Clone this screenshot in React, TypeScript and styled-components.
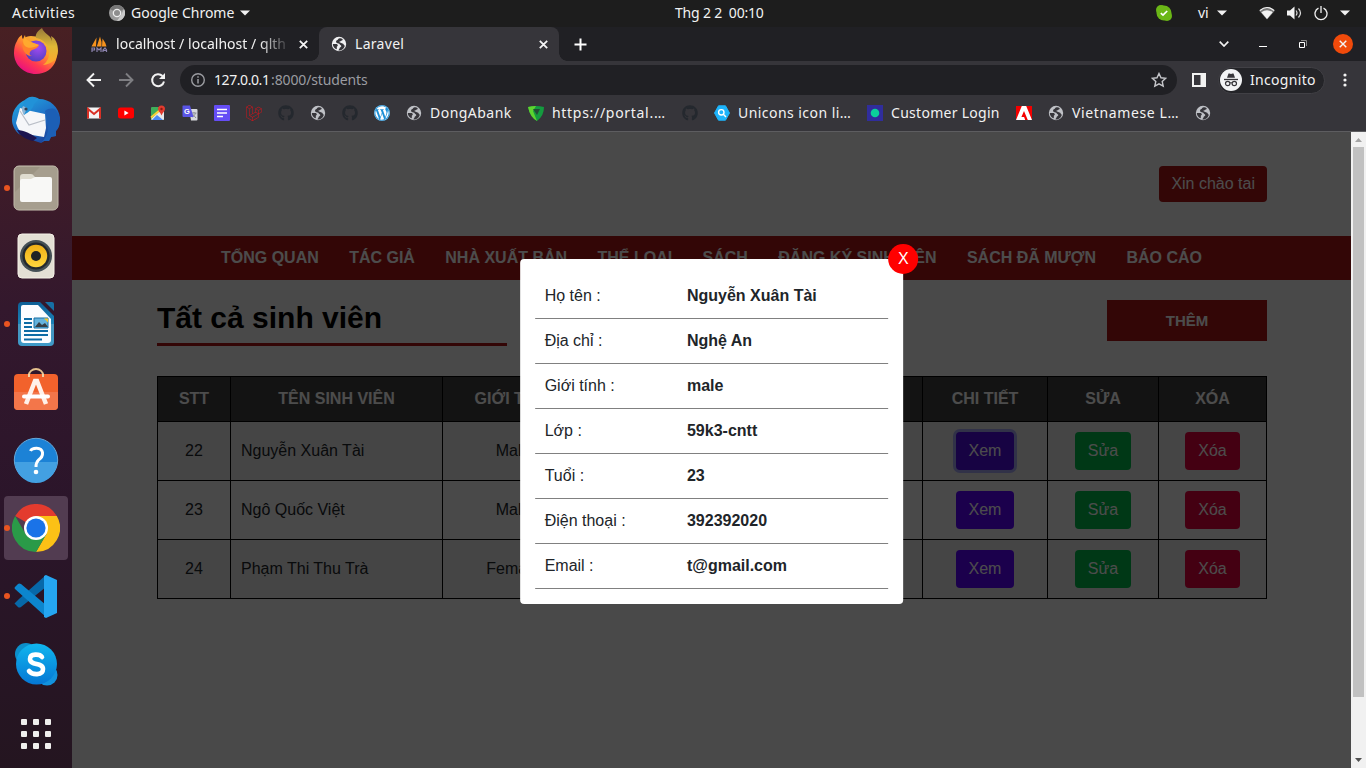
import React from "react";
import styled, { createGlobalStyle } from "styled-components";
import { FaGithub, FaLaravel, FaWordpress } from "react-icons/fa";

const GlobalStyle = createGlobalStyle`
  * { box-sizing: border-box; }
  body { margin: 0; overflow: hidden; background: #1d1d1d; }
  svg { display: block; flex: none; }
`;

const uiFont = `"Noto Sans", "Open Sans", sans-serif`;
const pageFont = `"Liberation Sans", Arial, sans-serif`;

const Desktop = styled.div`
  width: 1366px;
  height: 768px;
  display: flex;
  flex-direction: column;
  overflow: hidden;
  font-family: ${uiFont};
`;

const Label = styled.span<{ $w?: number; $size?: number; $ls?: number; $color?: string }>`
  display: block;
  flex: none;
  white-space: pre;
  width: ${(p) => (p.$w ? `${p.$w}px` : "auto")};
  font-size: ${(p) => p.$size ?? 14}px;
  letter-spacing: ${(p) => p.$ls ?? 0}px;
  color: ${(p) => p.$color ?? "#f2f2f2"};
`;

/* ---------- system bar ---------- */

const TopBar = styled.header`
  height: 27px;
  flex: none;
  display: grid;
  grid-template-columns: 675px auto 1fr;
  align-items: center;
  padding-bottom: 1px;
  background: #1d1d1d;
  line-height: 26px;
`;
const TopLeft = styled.div`
  display: flex;
  align-items: center;
  padding-left: 12px;
`;
const AppMenu = styled.div`
  display: flex;
  align-items: center;
  margin-left: 34px;
  gap: 6px;
`;
const Tray = styled.div`
  display: flex;
  align-items: center;
  justify-content: flex-end;
  padding-right: 16px;
`;
const TraySlot = styled.div<{ $ml: number }>`
  margin-left: ${(p) => p.$ml}px;
`;

const Caret = () => (
  <svg width="10" height="6" viewBox="0 0 10 6"><path d="M0 .5h10L5 5.5z" fill="#f2f2f2" /></svg>
);

/* ---------- dock ---------- */

const Workspace = styled.div`
  flex: 1;
  display: flex;
  min-height: 0;
`;
const Dock = styled.aside`
  width: 72px;
  flex: none;
  display: flex;
  flex-direction: column;
  overflow: hidden;
  background: linear-gradient(180deg, #482023 0%, #3d1b29 22%, #33182d 38%, #2b152a 65%, #241520 100%);
`;
const DockList = styled.div`
  display: flex;
  flex-direction: column;
  margin-top: -9px;
`;
const DockSlot = styled.div<{ $active?: boolean }>`
  height: 64px;
  margin: 2px 4px;
  border-radius: 4px;
  display: flex;
  align-items: center;
  background: ${(p) => (p.$active ? "#523c51" : "transparent")};
`;
const RunDot = styled.span<{ $on?: boolean }>`
  width: 6px;
  height: 6px;
  border-radius: 3px;
  margin-right: 2px;
  background: ${(p) => (p.$on ? "#e95420" : "transparent")};
`;
const AppGrid = styled.div`
  display: grid;
  grid-template-columns: repeat(3, 6px);
  gap: 6px;
  margin: 21px 0 0 21px;
`;
const GridDot = styled.span`
  height: 6px;
  border-radius: 1px;
  background: #f0efee;
`;

const FirefoxIcon = () => (
  <svg width="48" height="48" viewBox="0 0 48 48">
    <defs>
      <linearGradient id="ff1" x1=".85" y1=".1" x2=".25" y2=".95">
        <stop offset="0" stopColor="#e9c13d" /><stop offset=".35" stopColor="#ff9a2c" />
        <stop offset=".7" stopColor="#ff3a50" /><stop offset="1" stopColor="#e80f80" />
      </linearGradient>
      <radialGradient id="ff2" cx=".6" cy=".35" r=".7">
        <stop offset="0" stopColor="#a24af0" /><stop offset="1" stopColor="#4e3fc0" />
      </radialGradient>
      <linearGradient id="ff3" x1=".5" y1="0" x2=".5" y2="1">
        <stop offset="0" stopColor="#96793a" /><stop offset=".5" stopColor="#e0b936" /><stop offset="1" stopColor="#ffa62c" />
      </linearGradient>
    </defs>
    <path d="M5 13c1-3 3-5 5-6 0 2 0 3 1 4 2-2 5-3 8-3l10 1 12 6c4 5 5 11 3 17-3 9-11 14-20 14C12 46 2 37 2 25c0-5 1-9 3-12z" fill="url(#ff1)" />
    <path d="M30 0c-5 3-7 7-6 10 6 1 12 5 13 13 1 6-2 11-6 14 9-1 15-6 15-14 0-8-3-13-7-15l1 5C38 6 32 6 30 0z" fill="url(#ff3)" />
    <circle cx="24" cy="23" r="10.5" fill="url(#ff2)" />
    <path d="M10 15c3-3 8-2 11 0 2 1 4 1 6 2-1 3-4 4-7 5-2 1-3 3-2 5 0 0 1 1 2 1-5 1-10-5-10-13z" fill="#ff802b" />
    <path d="M13 7c0 3 2 5 6 7l8 3c-5 3-11 4-14 1s-2-8 0-11z" fill="#ffa92e" />
  </svg>
);
const ThunderbirdIcon = () => (
  <svg width="48" height="48" viewBox="0 0 48 48">
    <defs><linearGradient id="tb" x1=".2" y1="0" x2=".8" y2="1"><stop offset="0" stopColor="#22a5e0" /><stop offset=".5" stopColor="#1f6fc6" /><stop offset="1" stopColor="#1a3d94" /></linearGradient></defs>
    <path d="M13 4c3-2 5-4 9-3 2 0 4 1 5 2 11 0 20 8 21 19 0 5-1 10-4 13v5l-5 1-2 4-5 0-3 2-6-2-16-7C3 35 0 29 0 24 0 14 6 7 13 4z" fill="url(#tb)" />
    <path d="M4 27L8 12l11 3 14 3 1 14-2 9-12-2-12-4C6 33 5 30 4 27z" fill="#f5f6f9" />
    <path d="M8 15l9 14 16-5" fill="none" stroke="#b9bec7" strokeWidth="1.2" />
    <path d="M13 4c4-4 10-4 13 0l-4 4c-1 5-5 8-10 11-1-5-3-7 1-15z" fill="#2192d8" />
    <path d="M12 19c-2-3-3-6-1-9l4 2z" fill="#8fb6d5" />
    <circle cx="14" cy="13" r="1.6" fill="#323f54" />
    <path d="M33 15c4-3 8-3 11-1l4 8c0 6-1 10-4 13v5l-5 1-2 4h-5l-3 2c4-4 7-9 7-15 0-7-2-12-3-17z" fill="#1c5fb6" />
    <path d="M5 34c7 0 14 4 20 8l-4 3C13 43 8 40 5 34z" fill="#1c1450" />
  </svg>
);
const FilesIcon = () => (
  <svg width="48" height="48" viewBox="0 0 48 48">
    <rect x="2" y="2" width="44" height="44" rx="5" fill="#9c9483" stroke="#c8c2b2" />
    <path d="M3 28L28 3h14q3 0 3 4v34q0 4-3 4H7q-4 0-4-4z" fill="#a69e8e" />
    <path d="M8 13q0-3 3-3h8q2 0 3 2l2 2h14v8H8z" fill="#dfdccf" />
    <path d="M8 17q0-2 2-2h9l4-2h15q2 0 2 2v21q0 2-2 2H10q-2 0-2-2z" fill="#f8f8f6" />
  </svg>
);
const RhythmboxIcon = () => (
  <svg width="48" height="48" viewBox="0 0 48 48">
    <defs><linearGradient id="rb" x1=".5" y1="0" x2=".5" y2="1"><stop offset="0" stopColor="#efaf16" /><stop offset="1" stopColor="#ffd63d" /></linearGradient></defs>
    <rect x="6" y="2" width="36" height="44" rx="4" fill="#e3dfd4" stroke="#f5f1e7" />
    <circle cx="24" cy="24" r="16" fill="#455055" /><circle cx="24" cy="24" r="13.6" fill="#24292d" />
    <circle cx="24" cy="24" r="11.2" fill="url(#rb)" /><circle cx="24" cy="24" r="5" fill="#202225" />
  </svg>
);
const WriterIcon = () => (
  <svg width="48" height="48" viewBox="0 0 48 48">
    <defs><linearGradient id="wr" x1="0" y1="0" x2="0" y2="1"><stop offset="0" stopColor="#0d5f96" /><stop offset=".5" stopColor="#1d83b9" /><stop offset=".51" stopColor="#4796bf" /><stop offset="1" stopColor="#3e9ac8" /></linearGradient></defs>
    <path d="M10 2h18l14 14v26q0 4-4 4H10q-4 0-4-4V6q0-4 4-4z" fill="url(#wr)" />
    <path d="M11 5h15l13 14v21q0 3-3 3H12q-3 0-3-3V7q0-2 2-2z" fill="#fbfdff" />
    <path d="M33 2h7q2 0 2 2v7z" fill="#1670a5" />
    <path d="M12 19h8M12 23h8M12 27h8M12 31h24M12 35h24M12 39.500h18" stroke="#0e6ca5" strokeWidth="2" />
    <path d="M22 18h14v10H22z" fill="#65b3dd" stroke="#1670a5" /><path d="M23 27l4-5 3 3 3-2 3 4z" fill="#363f46" /><path d="M32 18.500h4v4z" fill="#f5c727" />
  </svg>
);
const SoftwareIcon = () => (
  <svg width="48" height="48" viewBox="0 2 48 48">
    <path d="M17 14V9c0-3 3-6 7-6s7 3 7 6v5" fill="none" stroke="#e4c08d" strokeWidth="2" />
    <rect x="2" y="8" width="44" height="36" rx="4" fill="#f2622c" /><path d="M2 26h44v14q0 4-4 4H6q-4 0-4-4z" fill="#f3764a" />
    <path d="M17 11V8M31 11V8" stroke="#efd3a7" strokeWidth="2" />
    <path d="M14 38l9-23h2l9 23" fill="none" stroke="#fff1ea" strokeWidth="4.500" />
    <path d="M12 30.500h24" stroke="#fff" strokeWidth="4" strokeLinecap="round" />
  </svg>
);
const HelpIcon = () => (
  <svg width="48" height="48" viewBox="0 0 48 48">
    <circle cx="24" cy="24" r="21.700" fill="#1c82d6" stroke="#65a8da" />
    <path d="M3 26h42a21 21 0 0 1-42 0z" fill="#43a0e2" />
    <path d="M18.500 15c1.500-3.500 11-4.500 12 1.500.5 4-1.500 5.500-4 7.500-2 2-2.500 3-2.500 7" fill="none" stroke="#fff" strokeWidth="3" />
    <circle cx="24" cy="36" r="2.300" fill="#fff" />
  </svg>
);
const ChromeIcon = () => (
  <svg width="48" height="48" viewBox="0 0 48 48">
    <path d="M24 24L3.200 12A24 24 0 0 1 44.800 12z" fill="#e33b2e" />
    <path d="M24 12h20.800A24 24 0 0 1 24 48l10.400-18z" fill="#fcc116" />
    <path d="M3.200 12A24 24 0 0 0 24 48l10.400-18L24 34l-10.400-4z" fill="#2a9a48" />
    <circle cx="24" cy="24" r="12" fill="#fff" /><circle cx="24" cy="24" r="9.600" fill="#1a73e8" />
  </svg>
);
const CodeIcon = () => (
  <svg width="48" height="48" viewBox="0 0 48 48">
    <path d="M3 31l4-4L34 3v12L9 35q-2 1-3 0l-3-3q-1-1 0-1z" fill="#0768a8" />
    <path d="M3 17q-1-1 0-2l3-3q1-1 3 0l25 21v12z" fill="#0c86ce" />
    <path d="M34 3l11 5v33l-11 5-2-1V4z" fill="#25a6f1" />
  </svg>
);
const SkypeIcon = () => (
  <svg width="48" height="48" viewBox="0 0 48 48">
    <defs><linearGradient id="sk" x1="0" y1="0" x2="0" y2="1"><stop offset="0" stopColor="#10b6ee" /><stop offset="1" stopColor="#0577d4" /></linearGradient></defs>
    <circle cx="14" cy="14" r="11" fill="#0c8fca" /><circle cx="35" cy="35" r="10.500" fill="#1292dd" />
    <circle cx="24.500" cy="24" r="20.500" fill="url(#sk)" />
    <path d="M30 17c-2-3-12-4-12 2 0 7 13 3 13 10 0 7-11 6-14 2" fill="none" stroke="#fff" strokeWidth="4.600" strokeLinecap="round" />
  </svg>
);

const dockApps = [
  { Icon: FirefoxIcon }, { Icon: ThunderbirdIcon }, { Icon: FilesIcon, on: true }, { Icon: RhythmboxIcon },
  { Icon: WriterIcon, on: true }, { Icon: SoftwareIcon }, { Icon: HelpIcon },
  { Icon: ChromeIcon, on: true, active: true }, { Icon: CodeIcon, on: true }, { Icon: SkypeIcon },
];

/* ---------- browser chrome ---------- */

const Browser = styled.section`
  flex: 1;
  display: flex;
  flex-direction: column;
  min-width: 0;
`;
const TabStrip = styled.div`
  height: 34px;
  flex: none;
  display: flex;
  align-items: center;
  background: #202024;
`;
const Tab = styled.div<{ $active?: boolean; $w: number }>`
  position: relative;
  width: ${(p) => p.$w}px;
  height: 34px;
  display: flex;
  align-items: center;
  gap: 8px;
  padding: 0 11px 0 ${(p) => (p.$active ? 12 : 19)}px;
  border-radius: 8px 8px 0 0;
  background: ${(p) => (p.$active ? "#36353a" : "transparent")};
  &::before, &::after {
    content: "";
    display: ${(p) => (p.$active ? "block" : "none")};
    position: absolute;
    bottom: 0;
    width: 8px;
    height: 8px;
  }
  &::before { left: -8px; background: radial-gradient(circle at 0 0, #202024 7.5px, #36353a 8px); }
  &::after { right: -8px; background: radial-gradient(circle at 100% 0, #202024 7.5px, #36353a 8px); }
`;
const TabTitle = styled.div<{ $fade?: boolean }>`
  flex: 1;
  overflow: hidden;
  line-height: 20px;
  mask-image: ${(p) => (p.$fade ? "linear-gradient(90deg, #000 82%, transparent 100%)" : "none")};
`;
const NewTab = styled.div`margin-left: 15px;`;
const WindowControls = styled.div`
  margin-left: auto;
  display: flex;
  align-items: center;
  padding-right: 13px;
`;
const CloseWindow = styled.div`
  width: 20px;
  height: 20px;
  border-radius: 50%;
  margin-left: 26px;
  background: #f04a0b;
  display: grid;
  place-items: center;
`;
const Toolbar = styled.div`
  height: 38px;
  flex: none;
  display: flex;
  align-items: center;
  padding: 0 17px 0 14px;
  background: #36353a;
`;
const NavButtons = styled.div`
  display: flex;
  gap: 16px;
`;
const Omnibox = styled.div`
  width: 997px;
  height: 30px;
  margin-left: 14px;
  border-radius: 15px;
  background: #202024;
  display: flex;
  align-items: center;
  padding: 0 10px;
  line-height: 20px;
`;
const OmniStar = styled.div`margin-left: auto;`;
const Profile = styled.div`
  width: 107px;
  height: 27px;
  margin: 0 14px 0 12px;
  border-radius: 14px;
  border: 1px solid #414045;
  background: #242428;
  display: flex;
  align-items: center;
  gap: 8px;
  padding-left: 1px;
  line-height: 20px;
`;
const BookmarkBar = styled.nav`
  height: 33px;
  flex: none;
  display: flex;
  align-items: flex-start;
  gap: 16px;
  padding: 6px 0 0 14px;
  background: #36353a;
  border-bottom: 1px solid #5d5d60;
`;
const Bookmark = styled.div`
  display: flex;
  align-items: center;
  gap: 8px;
  height: 16px;
  line-height: 16px;
`;

const Cross = ({ size = 9, w = 1.8 }: { size?: number; w?: number }) => (
  <svg width={size} height={size} viewBox="0 0 9 9"><path d="M.8.8l7.400 7.400M8.200.8L.8 8.200" stroke="#f4f4f5" strokeWidth={w} /></svg>
);
const Globe = ({ color = "#bfc1c6" }: { color?: string }) => (
  <svg width="16" height="16" viewBox="0 0 16 16">
    <circle cx="8" cy="8" r="7.200" fill={color} />
    <path d="M9.500 2.300C7 1.800 7.500 3.800 6 4.300c-1.500.5-1 2.200-.2 2.800 1 .7 2.600.2 3 1.300.4 1 1.700.6 1.500 1.800-.2 1-1.500.8-1.700 2-.1.900-1 1.300-1.300 2.300 3 .3 6-1.700 6.600-5-.7.2-1-.4-1.300-1.200-.3-1-1.800-.5-2.300-1.200-.6-.8-1.900-.5-1.900-1.200 0-.6 1.300-.3 1.500-.9.300-.8 1.700-.3 1.800-1.300.1-.7-1-1.200-2.200-1.400z" fill="#36353a" />
    <path d="M1.800 8h3.400c1 0 1.600.7 1.600 1.500s-1 .6-1 1.500.3 1.500-.3 2.200C3.300 12.400 1.900 10.500 1.800 8z" fill="#36353a" />
  </svg>
);
const PmaIcon = () => (
  <svg width="17" height="16" viewBox="0 0 17 16">
    <path d="M.5 10.500L5.500 1.500 5 10.500zM5.800 10.500L9 .5q2 5 1.500 10zM11 10.500l.5-8q3 4 4 8z" fill="#f6921e" />
    <path d="M1 16v-4h2.500v2H1M6 16v-4l2 2 2-2v4M12 16v-2l2-2 1.500 2v2M12 14.500h3.500" fill="none" stroke="#8b82ad" strokeWidth="1.200" />
  </svg>
);
const GmailIcon = () => (
  <svg width="16" height="16" viewBox="0 0 16 16"><rect x="1" y="2.500" width="14" height="11" rx="1" fill="#f3f3f3" /><path d="M2 13.500V4l6 5 6-5v9.500" fill="none" stroke="#d93025" strokeWidth="2" /></svg>
);
const YoutubeIcon = () => (
  <svg width="16" height="16" viewBox="0 0 16 16"><rect x="0" y="2.500" width="16" height="11" rx="2.500" fill="#f00" /><path d="M6.400 5.600v4.800L10.600 8z" fill="#fff" /></svg>
);
const MapsIcon = () => (
  <svg width="16" height="16" viewBox="0 0 16 16"><rect x="1" y="2" width="13" height="13" rx="1" fill="#3fae5a" /><path d="M1 14L12 4l2 2v8q0 1-1 1H2z" fill="#e8e8e8" /><path d="M2 15l5-5 6 5z" fill="#4a89f3" /><path d="M1 12.500L10 5" stroke="#fdd037" strokeWidth="2" /><path d="M11.500.5a3.500 3.500 0 0 1 3.500 3.500c0 2-2.500 3.500-3.500 6.500-1-3-3.500-4.500-3.500-6.500A3.500 3.500 0 0 1 11.500.5z" fill="#e33b2e" /><circle cx="11.500" cy="4" r="1.200" fill="#8c1a12" /></svg>
);
const TranslateIcon = () => (
  <svg width="16" height="16" viewBox="0 0 16 16"><path d="M7 4h7.500q1 0 1 1v9.500q0 1-1 1H9z" fill="#d7d9dd" /><path d="M9.500 8h5M12 7v1M13.500 8c-.5 2-2 3.500-3.500 4M10.500 9l3.500 4" stroke="#8c9095" fill="none" /><path d="M1 .5h7l3.500 11.500H1.500q-1 0-1-1V1.500q0-1 .5-1z" fill="#5a55e6" /><text x="2" y="8.800" fontSize="7.500" fontWeight="700" fill="#fff" fontFamily="Liberation Sans, sans-serif">G</text></svg>
);
const FormIcon = () => (
  <svg width="16" height="16" viewBox="0 0 16 16"><rect width="16" height="16" rx="1" fill="#654df5" /><path d="M3 4.500h10M3 8h10M3 11.500h6" stroke="#fff" strokeWidth="1.700" /></svg>
);
const ShieldIcon = () => (
  <svg width="16" height="16" viewBox="0 0 16 16"><path d="M0 2q4-1 8-1t8 1q0 9-7 14Q2 12 0 2z" fill="#149b3f" /><path d="M0 2q4-1 8-1l-3 5 4 10Q2 12 0 2z" fill="#5ed32f" /><path d="M5 4h7l-3 6z" fill="#234d35" /></svg>
);
const UniconsIcon = () => (
  <svg width="16" height="16" viewBox="0 0 16 16"><path d="M4.500.8h7L15.500 8l-4 7.200h-7L.5 8z" fill="#1db4fb" stroke="#1db4fb" strokeLinejoin="round" /><circle cx="7.300" cy="7.300" r="2.700" fill="none" stroke="#fff" strokeWidth="1.400" /><path d="M9.300 9.300l2.700 2.700" stroke="#fff" strokeWidth="1.400" /></svg>
);
const CustomerIcon = () => (
  <svg width="16" height="16" viewBox="0 0 16 16"><rect width="16" height="16" fill="#302d9b" /><circle cx="8" cy="8" r="4.300" fill="#0bd09a" /></svg>
);
const AdobeIcon = () => (
  <svg width="16" height="16" viewBox="0 0 16 16"><rect y="1" width="16" height="14" fill="#fff" /><path d="M0 1h5.800L0 15zM10.200 1H16v14zM8 6l3.800 9H9.200L8.100 12H5.400z" fill="#f40000" /></svg>
);
const github = <FaGithub size={16} color="#24282e" />;

const bookmarks: { icon: React.ReactNode; text?: string; w?: number; ls?: number }[] = [
  { icon: <GmailIcon /> }, { icon: <YoutubeIcon /> }, { icon: <MapsIcon /> }, { icon: <TranslateIcon /> },
  { icon: <FormIcon /> }, { icon: <FaLaravel size={16} color="#d3151b" /> }, { icon: github }, { icon: <Globe /> }, { icon: github },
  { icon: <FaWordpress size={16} color="#fff" style={{ background: "#1c8fd6", borderRadius: 8 }} /> },
  { icon: <Globe />, text: "DongAbank", w: 82, ls: 0.47 },
  { icon: <ShieldIcon />, text: "https://portal.…", w: 114, ls: 0.7 },
  { icon: github },
  { icon: <UniconsIcon />, text: "Unicons icon li…", w: 113, ls: 0.45 },
  { icon: <CustomerIcon />, text: "Customer Login", w: 109, ls: 0.28 },
  { icon: <AdobeIcon /> },
  { icon: <Globe />, text: "Vietnamese L…", w: 107, ls: 0.62 },
  { icon: <Globe /> },
];

/* ---------- web page ---------- */

const Viewport = styled.div`
  flex: 1;
  display: flex;
  min-height: 0;
`;
const Page = styled.main`
  position: relative;
  width: 1279px;
  background: #f4f4f4;
  font-family: ${pageFont};
  font-size: 16px;
  line-height: 24px;
  overflow: hidden;
`;
const Container = styled.div`
  width: 1110px;
  margin: 0 0 0 85px;
`;
const Header = styled(Container)`
  height: 104px;
  display: flex;
  align-items: center;
  justify-content: flex-end;
`;
const Greeting = styled.div`
  height: 36px;
  padding: 6px 12px;
  border-radius: 4px;
  color: #fff;
  background: #aa1414;
`;
const Menu = styled.nav`
  height: 44px;
  display: flex;
  justify-content: center;
  align-items: center;
  gap: 30.4px;
  color: #fff;
  font-weight: 700;
  background: #aa1414;
`;
const TitleRow = styled(Container)`
  display: flex;
  justify-content: space-between;
  align-items: flex-start;
  padding-top: 20px;
  height: 96px;
`;
const Title = styled.h1`
  width: 350px;
  height: 46px;
  margin: 0;
  border-bottom: 3px solid #aa1414;
  font-size: 30px;
  line-height: 36px;
  color: #000;
`;
const AddButton = styled.div`
  width: 160px;
  height: 41px;
  line-height: 41px;
  text-align: center;
  font-size: 15px;
  font-weight: 700;
  color: #fff;
  background: #aa1414;
`;
const Table = styled(Container)`
  border-top: 1px solid #000;
  border-left: 1px solid #000;
`;
const Row = styled.div<{ $head?: boolean; $striped?: boolean }>`
  display: grid;
  grid-template-columns: 73px 212px 141px 339px 125px 111px 108px;
  height: ${(p) => (p.$head ? 45 : 59)}px;
  color: ${(p) => (p.$head ? "#fff" : "#212529")};
  font-weight: ${(p) => (p.$head ? 700 : 400)};
  background: ${(p) => (p.$head ? "#424242" : p.$striped ? "#e8e8e8" : "#f4f4f4")};
`;
const Cell = styled.div<{ $left?: boolean }>`
  display: flex;
  align-items: center;
  justify-content: ${(p) => (p.$left ? "flex-start" : "center")};
  padding: 0 10px;
  border-right: 1px solid #000;
  border-bottom: 1px solid #000;
`;
const ActionButton = styled.div<{ $bg: string; $focus?: boolean }>`
  height: 38px;
  padding: 7px 13px;
  border-radius: 4px;
  color: #fff;
  background: ${(p) => p.$bg};
  box-shadow: ${(p) => (p.$focus ? "0 0 0 3px #a5a8f0" : "none")};
`;
const Overlay = styled.div`
  position: absolute;
  inset: 0;
  background: rgba(0, 0, 0, 0.7);
`;
const Modal = styled.div`
  position: absolute;
  top: 127px;
  left: 50%;
  width: 30%;
  transform: translateX(-50%);
  padding: 15px;
  border-radius: 4px;
  background: #fff;
  color: #212529;
`;
const Detail = styled.div`
  display: grid;
  grid-template-columns: 142.300px 1fr;
  height: 45px;
  border-bottom: 1px solid #808080;
  > * { padding: 10px; }
`;
const CloseModal = styled.div`
  position: absolute;
  top: -15px;
  right: -15px;
  width: 30px;
  height: 30px;
  border-radius: 50%;
  line-height: 29px;
  text-align: center;
  color: #fff;
  background: #f00;
`;
const Scrollbar = styled.div`
  width: 15px;
  display: flex;
  flex-direction: column;
  align-items: center;
  background: #f1f1f1;
`;
const Thumb = styled.div`
  width: 11px;
  height: 550px;
  background: #c1c1c1;
`;
const ScrollArrow = styled.div<{ $down?: boolean }>`
  height: 15px;
  display: grid;
  place-items: center;
  margin-top: ${(p) => (p.$down ? "auto" : 0)};
  transform: ${(p) => (p.$down ? "rotate(180deg)" : "none")};
  color: ${(p) => (p.$down ? "#505050" : "#a3a3a3")};
`;
const Arrow = () => <svg width="7" height="4" viewBox="0 0 7 4"><path d="M0 4l3.500-4L7 4z" fill="currentColor" /></svg>;

const menu = ["TỔNG QUAN", "TÁC GIẢ", "NHÀ XUẤT BẢN", "THỂ LOẠI", "SÁCH", "ĐĂNG KÝ SINH VIÊN", "SÁCH ĐÃ MƯỢN", "BÁO CÁO"];
const columns = ["STT", "TÊN SINH VIÊN", "GIỚI TÍNH", "", "CHI TIẾT", "SỬA", "XÓA"];
const students = [
  { id: 22, name: "Nguyễn Xuân Tài", gender: "Male" },
  { id: 23, name: "Ngô Quốc Việt", gender: "Male" },
  { id: 24, name: "Phạm Thi Thu Trà", gender: "Female" },
];
const details = [
  ["Họ tên :", "Nguyễn Xuân Tài"], ["Địa chỉ :", "Nghệ An"], ["Giới tính :", "male"], ["Lớp :", "59k3-cntt"],
  ["Tuổi :", "23"], ["Điện thoại :", "392392020"], ["Email :", "t@gmail.com"],
];

export default function App() {
  return (
    <Desktop>
      <GlobalStyle />
      <TopBar>
        <TopLeft>
          <Label $w={63} $ls={0.5}>Activities</Label>
          <AppMenu>
            <svg width="16" height="16" viewBox="0 0 16 16"><circle cx="8" cy="8" r="8" fill="#9b9b9b" /><path d="M8 8L1 4a8 8 0 0 1 14 0z" fill="#777" /><path d="M8 16l4-6 3-6a8 8 0 0 1-7 12z" fill="#c9c9c9" /><circle cx="8" cy="8" r="4.300" fill="#eee" /><circle cx="8" cy="8" r="3" fill="#8d8d8d" /></svg>
            <Label $w={103}>Google Chrome</Label>
            <Caret />
          </AppMenu>
        </TopLeft>
        <Label $w={90} $ls={-0.2}>Thg 2 2  00:10</Label>
        <Tray>
          <svg width="16" height="16" viewBox="0 0 16 16"><circle cx="5" cy="5" r="5" fill="#6bb717" /><circle cx="11" cy="11" r="5" fill="#6bb717" /><circle cx="8" cy="8" r="7.500" fill="#6bb717" /><path d="M4.800 8.200l2.200 2L11.200 6" fill="none" stroke="#fff" strokeWidth="1.700" /></svg>
          <TraySlot $ml={26}><Label $w={11}>vi</Label></TraySlot>
          <TraySlot $ml={8}><Caret /></TraySlot>
          <TraySlot $ml={32}><svg width="16" height="14" viewBox="0 0 16 14"><path d="M0 4.500Q8-2.500 16 4.500L8 13.500z" fill="#777" /><path d="M1 4.500Q8-1.500 15 4.500" fill="none" stroke="#f2f2f2" strokeWidth="1.200" /><path d="M2.300 6.300Q8 2.300 13.700 6.300L8 13z" fill="#f2f2f2" /></svg></TraySlot>
          <TraySlot $ml={12}><svg width="15" height="14" viewBox="0 0 15 14"><path d="M0 4.500h3L7.500.500v13L3 9.500H0z" fill="#f2f2f2" /><path d="M9 4.500q2 2.500 0 5M11.500 2.500q4 4.500 0 9" fill="none" stroke="#ddd" strokeWidth="1.200" /></svg></TraySlot>
          <TraySlot $ml={12}><svg width="14" height="15" viewBox="0 0 14 15"><path d="M4.500 2.200a6 6 0 1 0 5 0M7 0v7" fill="none" stroke="#f2f2f2" strokeWidth="1.300" /></svg></TraySlot>
          <TraySlot $ml={12}><Caret /></TraySlot>
        </Tray>
      </TopBar>

      <Workspace>
        <Dock>
          <DockList>
            {dockApps.map(({ Icon, on, active }, i) => (
              <DockSlot key={i} $active={active}><RunDot $on={on} /><Icon /></DockSlot>
            ))}
          </DockList>
          <AppGrid>{Array.from({ length: 9 }, (_, i) => <GridDot key={i} />)}</AppGrid>
        </Dock>

        <Browser>
          <TabStrip>
            <Tab $w={247}>
              <PmaIcon />
              <TabTitle $fade><Label $ls={0.03}>localhost / localhost / qlth</Label></TabTitle>
              <Cross />
            </Tab>
            <Tab $active $w={240}>
              <Globe color="#f1f1f3" />
              <TabTitle><Label $ls={0.3}>Laravel</Label></TabTitle>
              <Cross />
            </Tab>
            <NewTab><svg width="13" height="13" viewBox="0 0 13 13"><path d="M6.500 .5v12M.5 6.500h12" stroke="#fff" strokeWidth="2" /></svg></NewTab>
            <WindowControls>
              <svg width="10" height="6" viewBox="0 0 10 6"><path d="M.7.7L5 5 9.300.7" fill="none" stroke="#f2f2f2" strokeWidth="1.700" /></svg>
              <TraySlot $ml={30}><svg width="8" height="6" viewBox="0 0 8 6"><path d="M0 5.500h8" stroke="#fff" /></svg></TraySlot>
              <TraySlot $ml={32}><svg width="8" height="8" viewBox="0 0 8 8"><path d="M2 .5h5.500V6" fill="none" stroke="#888" /><path d="M.5 2.500h5v5h-5z" fill="none" stroke="#fff" /></svg></TraySlot>
              <CloseWindow><Cross size={8} w={1.6} /></CloseWindow>
            </WindowControls>
          </TabStrip>
          <Toolbar>
            <NavButtons>
              <svg width="16" height="16" viewBox="0 0 16 16"><path d="M15 8H2M8 1.500L1.500 8 8 14.500" fill="none" stroke="#f2f2f2" strokeWidth="1.900" /></svg>
              <svg width="16" height="16" viewBox="0 0 16 16"><path d="M1 8h13M8 1.500L14.500 8 8 14.500" fill="none" stroke="#7e7e82" strokeWidth="1.900" /></svg>
              <svg width="16" height="16" viewBox="0 0 16 16"><path d="M14 9.500A6 6 0 1 1 12.500 4" fill="none" stroke="#f2f2f2" strokeWidth="2" /><path d="M15 1v6H9z" fill="#f2f2f2" /></svg>
            </NavButtons>
            <Omnibox>
              <svg width="16" height="16" viewBox="0 0 16 16"><circle cx="8" cy="8" r="6.300" fill="none" stroke="#9b9ca1" strokeWidth="1.400" /><path d="M8 7v4.500M8 4.300v1.500" stroke="#9b9ca1" strokeWidth="1.500" /></svg>
              <TraySlot $ml={8}><Label $w={57} $ls={-0.42}>127.0.0.1</Label></TraySlot>
              <Label $color="#9b9ca1" $ls={-0.12}>:8000/students</Label>
              <OmniStar><svg width="16" height="16" viewBox="0 0 16 16"><path d="M8 1.500l2 4.300 4.700.5-3.500 3.200 1 4.700L8 11.800l-4.200 2.400 1-4.700L1.300 6.300 6 5.800z" fill="none" stroke="#c5c6ca" strokeWidth="1.400" /></svg></OmniStar>
            </Omnibox>
            <TraySlot $ml={15}><svg width="14" height="14" viewBox="0 0 14 14"><path d="M0 0h14v14H0zM2 2v10h6.500V2z" fill="#f2f2f2" fillRule="evenodd" /></svg></TraySlot>
            <Profile>
              <svg width="22" height="22" viewBox="0 0 22 22"><circle cx="11" cy="11" r="11" fill="#f2f3f5" /><path d="M4 10.500h14" stroke="#36353a" strokeWidth="1.300" /><path d="M7 8.800l1.500-4.300h1l1.500.6 1.500-.6h1L15 8.800z" fill="#36353a" /><circle cx="7.700" cy="14.500" r="2.200" fill="none" stroke="#36353a" strokeWidth="1.200" /><circle cx="14.300" cy="14.500" r="2.200" fill="none" stroke="#36353a" strokeWidth="1.200" /><path d="M10 14q1-.6 2 0" stroke="#36353a" fill="none" /></svg>
              <Label $ls={0.32}>Incognito</Label>
            </Profile>
            <TraySlot $ml={4}><svg width="4" height="14" viewBox="0 0 4 14"><circle cx="2" cy="2" r="1.600" fill="#f2f2f2" /><circle cx="2" cy="7" r="1.600" fill="#f2f2f2" /><circle cx="2" cy="12" r="1.600" fill="#f2f2f2" /></svg></TraySlot>
          </Toolbar>
          <BookmarkBar>
            {bookmarks.map((b, i) => (
              <Bookmark key={i}>{b.icon}{b.text && <Label $w={b.w} $ls={b.ls}>{b.text}</Label>}</Bookmark>
            ))}
          </BookmarkBar>

          <Viewport>
            <Page>
              <Header><Greeting>Xin chào tai</Greeting></Header>
              <Menu>{menu.map((m) => <span key={m}>{m}</span>)}</Menu>
              <TitleRow>
                <Title>Tất cả sinh viên</Title>
                <AddButton>THÊM</AddButton>
              </TitleRow>
              <Table>
                <Row $head>{columns.map((c, i) => <Cell key={i}>{c}</Cell>)}</Row>
                {students.map((s, i) => (
                  <Row key={s.id} $striped={i % 2 === 0}>
                    <Cell>{s.id}</Cell>
                    <Cell $left>{s.name}</Cell>
                    <Cell>{s.gender}</Cell>
                    <Cell />
                    <Cell><ActionButton $bg={i === 0 ? "#4e0ae0" : "#5b00ff"} $focus={i === 0}>Xem</ActionButton></Cell>
                    <Cell><ActionButton $bg="#00bb4a">Sửa</ActionButton></Cell>
                    <Cell><ActionButton $bg="#e4003c">Xóa</ActionButton></Cell>
                  </Row>
                ))}
              </Table>
              <Overlay />
              <Modal>
                <CloseModal>X</CloseModal>
                {details.map(([k, v]) => <Detail key={k}><span>{k}</span><b>{v}</b></Detail>)}
              </Modal>
            </Page>
            <Scrollbar>
              <ScrollArrow><Arrow /></ScrollArrow>
              <Thumb />
              <ScrollArrow $down><Arrow /></ScrollArrow>
            </Scrollbar>
          </Viewport>
        </Browser>
      </Workspace>
    </Desktop>
  );
}
